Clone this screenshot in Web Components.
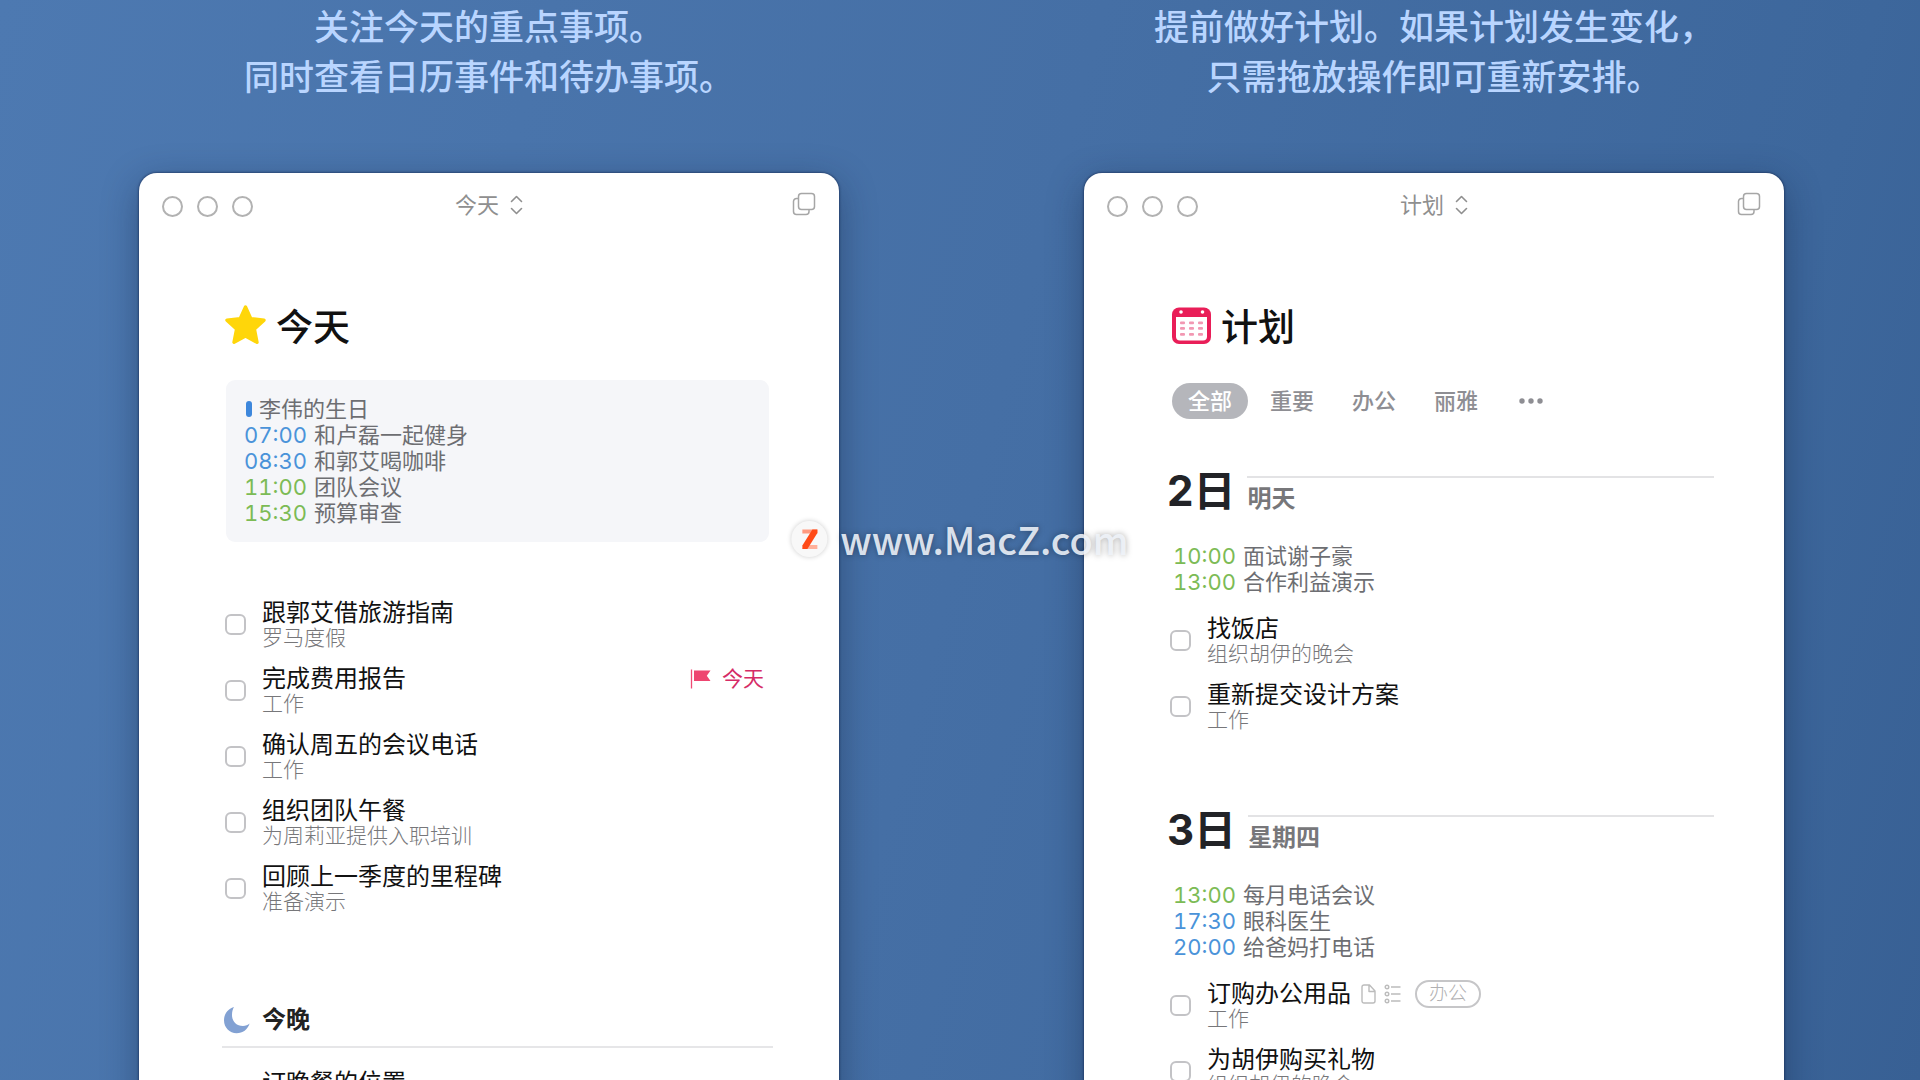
<!DOCTYPE html>
<html lang="zh-CN">
<head>
<meta charset="utf-8">
<title>今天 / 计划</title>
<style>
  html, body {
    margin: 0;
    height: 100%;
  }
  body {
    font-family: Inter, "Noto Sans CJK SC", sans-serif;
    background: #436da3;
  }
</style>
</head>
<body>
<promo-page>
  <promo-column>
    <span slot="headline">关注今天的重点事项。<br>同时查看日历事件和待办事项。</span>
    <app-window name="今天">
      <list-heading icon="star">今天</list-heading>
      <event-list boxed>
        <event-row>李伟的生日</event-row>
        <event-row time="07:00">和卢磊一起健身</event-row>
        <event-row time="08:30">和郭艾喝咖啡</event-row>
        <event-row time="11:00" kind="work">团队会议</event-row>
        <event-row time="15:30" kind="work">预算审查</event-row>
      </event-list>
      <todo-list>
        <todo-item project="罗马度假">跟郭艾借旅游指南</todo-item>
        <todo-item project="工作">完成费用报告<deadline-flag slot="end">今天</deadline-flag></todo-item>
        <todo-item project="工作">确认周五的会议电话</todo-item>
        <todo-item project="为周莉亚提供入职培训">组织团队午餐</todo-item>
        <todo-item project="准备演示">回顾上一季度的里程碑</todo-item>
      </todo-list>
      <evening-heading>今晚</evening-heading>
      <todo-list>
        <todo-item>订晚餐的位置</todo-item>
      </todo-list>
    </app-window>
  </promo-column>

  <promo-column>
    <span slot="headline">提前做好计划。如果计划发生变化，<br>只需拖放操作即可重新安排。</span>
    <app-window name="计划">
      <list-heading icon="calendar">计划</list-heading>
      <tag-filter tags="全部,重要,办公,丽雅"></tag-filter>
      <day-section day="2日" label="明天">
        <event-list>
          <event-row time="10:00" kind="work">面试谢子豪</event-row>
          <event-row time="13:00" kind="work">合作利益演示</event-row>
        </event-list>
        <todo-list>
          <todo-item project="组织胡伊的晚会">找饭店</todo-item>
          <todo-item project="工作">重新提交设计方案</todo-item>
        </todo-list>
      </day-section>
      <day-section day="3日" label="星期四">
        <event-list>
          <event-row time="13:00" kind="work">每月电话会议</event-row>
          <event-row time="17:30">眼科医生</event-row>
          <event-row time="20:00">给爸妈打电话</event-row>
        </event-list>
        <todo-list>
          <todo-item project="工作">订购办公用品<todo-meta slot="meta">办公</todo-meta></todo-item>
          <todo-item project="组织胡伊的晚会">为胡伊购买礼物</todo-item>
        </todo-list>
      </day-section>
    </app-window>
  </promo-column>
</promo-page>
<site-watermark>www.MacZ.com</site-watermark>

<script>
const icons = {
  star: `<svg width="41" height="41" viewBox="0 0 41 41"><path d="M20.5 2 L25.800 13.600 L39 15.200 L29.400 24 L32 37.300 L20.5 31 L9 37.300 L11.600 24 L2 15.200 L15.200 13.600 Z" fill="#ffd60a" stroke="#ffd60a" stroke-width="3.400" stroke-linejoin="round"/></svg>`,
  calendar: `<svg width="41" height="41" viewBox="0 0 41 41">
    <rect x="2" y="2.500" width="39" height="36.500" rx="7" fill="#e91e58"/>
    <path d="M6 12H37V31.500a4 4 0 0 1-4 4H10a4 4 0 0 1-4-4Z" fill="#fff"/>
    <circle cx="11" cy="7" r="1.800" fill="#fff"/><circle cx="32.500" cy="7" r="1.800" fill="#fff"/>
    <g fill="#f298b2"><rect x="10" y="16.500" width="5" height="2.800" rx="1"/><rect x="19" y="16.500" width="5" height="2.800" rx="1"/><rect x="28" y="16.500" width="5" height="2.800" rx="1"/>
    <rect x="10" y="22" width="5" height="2.800" rx="1"/><rect x="19" y="22" width="5" height="2.800" rx="1"/><rect x="28" y="22" width="5" height="2.800" rx="1"/>
    <rect x="10" y="28" width="5" height="2.800" rx="1"/><rect x="19" y="28" width="5" height="2.800" rx="1"/><rect x="28" y="28" width="5" height="2.800" rx="1"/></g></svg>`,
  updown: `<svg width="13" height="20" viewBox="0 0 13 20" fill="none" stroke="#8f8f8f" stroke-width="1.600" stroke-linecap="round" stroke-linejoin="round"><path d="M1.500 6.500 6.500 1.500l5 5M1.500 13.500l5 5 5-5"/></svg>`,
  windows: `<svg width="24" height="26" viewBox="0 0 24 26" fill="none" stroke="#a6a6a6" stroke-width="1.500"><rect x="6.500" y="1.500" width="16" height="16" rx="3"/><path d="M6 6.500H4.500a3 3 0 0 0-3 3V19.500a3 3 0 0 0 3 3H14a3 3 0 0 0 3-3V18"/></svg>`,
  moon: `<svg width="27" height="28" viewBox="0 0 27 28"><path d="M10 1C3.500 3.200 0 8.200 0 14.200c0 7.400 5.600 13 12.600 13 6.200 0 11-3.600 13-9.700-1.600 1.600-4 2.500-6.600 2.500C12.500 20 8 15.500 8 9c0-3 .6-5.600 2-8Z" fill="#82a1d3"/></svg>`,
  flag: `<svg width="22" height="20" viewBox="0 0 22 20"><path d="M1.500 0.500V19.500" stroke="#ef4a74" stroke-width="1.300"/><path d="M4 1.500H20.500L16.800 6.800 20.500 12H4Z" fill="#ee4570"/></svg>`,
  note: `<svg width="15" height="20" viewBox="0 0 15 20" fill="none" stroke="#bcbcbc" stroke-width="1.400" stroke-linejoin="round"><path d="M3 1H8.500L14 7V17a2 2 0 0 1-2 2H3a2 2 0 0 1-2-2V3a2 2 0 0 1 2-2ZM8 1.500V7.500H14"/></svg>`,
  checklist: `<svg width="17" height="20" viewBox="0 0 17 20" fill="none" stroke="#bcbcbc" stroke-width="1.400"><circle cx="3" cy="3" r="1.800"/><circle cx="3" cy="10" r="1.800"/><circle cx="3" cy="17" r="1.800"/><path d="M7 3h9.500M7 10h9.500M7 17h9.500"/></svg>`,
  more: `<svg width="30" height="6" viewBox="0 0 30 6" fill="#8e8e93"><circle cx="6" cy="3" r="2.700"/><circle cx="15" cy="3" r="2.700"/><circle cx="24" cy="3" r="2.700"/></svg>`,
};

class BaseElement extends HTMLElement {
  connectedCallback() {
    if (this.shadowRoot) {
      return;
    }
    const root = this.attachShadow({mode: 'open'});
    root.innerHTML = this.render();
  }
  attr(name) {
    return this.getAttribute(name) || '';
  }
}

class PromoPage extends BaseElement {
  render() {
    return `
      <style>
        :host {
          display: grid;
          grid-template-columns: 1fr 1fr;
          column-gap: 245px;
          box-sizing: border-box;
          height: 100vh;
          padding: 0 136px 0 139px;
          overflow: hidden;
          background: linear-gradient(105deg, #4d79b1 0%, #456fa5 50%, #3d679c 85%, #386094 100%);
        }
      </style>
      <slot></slot>
    `;
  }
}

class PromoColumn extends BaseElement {
  render() {
    return `
      <style>
        :host {
          display: flex;
          flex-direction: column;
          gap: 73px;
          min-width: 0;
        }
        h1 {
          margin: 0;
          font-size: 35px;
          line-height: 50px;
          font-weight: 500;
          text-align: center;
          white-space: nowrap;
          color: #b9d5ff;
          font-family: "Noto Sans CJK SC", sans-serif;
        }
      </style>
      <h1><slot name="headline"></slot></h1>
      <slot></slot>
    `;
  }
}

class AppWindow extends BaseElement {
  render() {
    return `
      <style>
        :host {
          display: block;
          min-height: 1100px;
          border-radius: 18px;
          background: #fff;
          box-shadow: 0 0 2px 1px rgba(20, 40, 80, .5), 0 10px 36px rgba(15, 30, 60, .4);
        }
        header {
          display: grid;
          grid-template-columns: 1fr auto 1fr;
          align-items: center;
          height: 64px;
          padding: 0 23px;
        }
        button {
          padding: 0;
          border: 0;
          background: none;
          font: inherit;
          color: inherit;
        }
        .lights {
          display: flex;
          gap: 14px;
          padding-top: 2px;
        }
        .lights button {
          width: 21px;
          height: 21px;
          border: 2px solid #b2b2b2;
          border-radius: 50%;
        }
        .name {
          display: flex;
          align-items: center;
          gap: 11px;
          font-size: 22px;
          line-height: 30px;
          color: #8f8f8f;
        }
        .copy {
          display: flex;
          justify-self: end;
        }
        main {
          padding: 64px 70px 0 86px;
        }
      </style>
      <header>
        <div class="lights">
          <button aria-label="关闭"></button>
          <button aria-label="最小化"></button>
          <button aria-label="缩放"></button>
        </div>
        <button class="name">${this.attr('name')}${icons.updown}</button>
        <button class="copy" aria-label="新窗口">${icons.windows}</button>
      </header>
      <main><slot></slot></main>
    `;
  }
}

class ListHeading extends BaseElement {
  render() {
    return `
      <style>
        :host {
          display: block;
        }
        h2 {
          display: flex;
          align-items: center;
          gap: 10px;
          margin: 0;
          font: 500 37px/48px "Noto Sans CJK SC", sans-serif;
          color: #111;
        }
      </style>
      <h2>${icons[this.attr('icon')]}<span><slot></slot></span></h2>
    `;
  }
}

class EventList extends BaseElement {
  render() {
    return `
      <style>
        :host {
          display: block;
          padding-left: 3px;
        }
        :host([boxed]) {
          margin: 31px 0 57px 1px;
          padding: 16px 18px;
          border-radius: 9px;
          background: #f5f6f9;
        }
      </style>
      <slot></slot>
    `;
  }
}

class EventRow extends BaseElement {
  render() {
    const time = this.attr('time');
    return `
      <style>
        :host {
          display: flex;
          align-items: center;
          gap: 7px;
          font-size: 22px;
          line-height: 26px;
          color: #6d6e72;
        }
        time {
          min-width: 61px;
          font-variant-numeric: tabular-nums;
          color: #4a93d9;
        }
        :host([kind="work"]) time {
          color: #7cbb55;
        }
        i {
          width: 6px;
          height: 16px;
          margin-left: 2px;
          border-radius: 3px;
          background: #3d87dc;
        }
      </style>
      ${time ? `<time>${time}</time>` : '<i></i>'}
      <span><slot></slot></span>
    `;
  }
}

class TodoList extends BaseElement {
  render() {
    return `
      <style>
        :host {
          display: flex;
          flex-direction: column;
          gap: 16px;
        }
      </style>
      <slot></slot>
    `;
  }
}

class TodoItem extends BaseElement {
  render() {
    return `
      <style>
        :host {
          display: flex;
          align-items: center;
          gap: 16px;
          min-height: 50px;
        }
        input {
          appearance: none;
          flex: none;
          width: 21px;
          height: 21px;
          margin: 0;
          border: 2px solid #c3c3c6;
          border-radius: 6px;
          background: #fff;
        }
        .body {
          flex: 1;
          align-self: flex-start;
        }
        .line {
          display: flex;
          align-items: center;
          height: 28px;
          font-size: 24px;
          line-height: 28px;
          color: #111;
        }
        slot[name="end"] {
          display: block;
          margin-left: auto;
        }
        p {
          margin: 0;
          font-size: 21px;
          line-height: 22px;
          font-weight: 300;
          color: #77777a;
        }
      </style>
      <input type="checkbox" id="done">
      <div class="body">
        <div class="line"><label for="done"><slot></slot></label><slot name="meta"></slot><slot name="end"></slot></div>
        <p>${this.attr('project')}</p>
      </div>
    `;
  }
}

class DeadlineFlag extends BaseElement {
  render() {
    return `
      <style>
        :host {
          display: flex;
          align-items: center;
          gap: 10px;
          margin-right: 5px;
          font-size: 21px;
          color: #d52b66;
        }
      </style>
      ${icons.flag}<span><slot></slot></span>
    `;
  }
}

class TodoMeta extends BaseElement {
  render() {
    return `
      <style>
        :host {
          display: flex;
          align-items: center;
          gap: 8px;
          margin-left: 10px;
        }
        span {
          margin-left: 6px;
          padding: 0 12px;
          border: 2px solid #c6c6c8;
          border-radius: 14px;
          font-size: 19px;
          line-height: 24px;
          font-weight: 300;
          color: #b0b0b2;
        }
      </style>
      ${icons.note}${icons.checklist}<span><slot></slot></span>
    `;
  }
}

class EveningHeading extends BaseElement {
  render() {
    return `
      <style>
        :host {
          display: block;
          margin: 91px -4px 21px -3px;
          padding: 0 2px 10px;
          border-bottom: 2px solid #e6e6e8;
        }
        h3 {
          display: flex;
          align-items: center;
          gap: 11px;
          margin: 0;
          font-size: 24px;
          line-height: 32px;
          font-weight: 700;
          color: #222;
        }
      </style>
      <h3>${icons.moon}<span><slot></slot></span></h3>
    `;
  }
}

class TagFilter extends BaseElement {
  render() {
    const tags = this.attr('tags').split(',');
    return `
      <style>
        :host {
          display: flex;
          gap: 6px;
          margin-top: 34px;
          padding-left: 2px;
        }
        button {
          height: 36px;
          padding: 0 16px;
          border: 0;
          border-radius: 18px;
          background: none;
          font: 500 22px/36px Inter, "Noto Sans CJK SC", sans-serif;
          color: #8e8e93;
        }
        button[aria-pressed="true"] {
          background: #b5b6bb;
          color: #fff;
        }
        svg {
          display: block;
        }
      </style>
      ${tags.map((tag, i) => `<button aria-pressed="${i === 0}">${tag}</button>`).join('')}
      <button aria-label="更多">${icons.more}</button>
    `;
  }
}

class DaySection extends BaseElement {
  render() {
    return `
      <style>
        :host {
          display: block;
          margin-top: 48px;
        }
        :host(:nth-of-type(n+2)) {
          margin-top: 75px;
        }
        header {
          display: flex;
          gap: 12px;
          margin: 0 0 28px -3px;
        }
        h3, h4 {
          margin: 0;
          font-weight: 700;
        }
        h3 {
          font-size: 42px;
          line-height: 48px;
          color: #222327;
        }
        h4 {
          flex: 1;
          margin-top: 9px;
          padding-top: 7px;
          border-top: 2px solid #e3e3e5;
          font-size: 24px;
          line-height: 28px;
          color: #77777a;
        }
        ::slotted(todo-list) {
          margin-top: 20px;
        }
      </style>
      <header>
        <h3>${this.attr('day')}</h3>
        <h4>${this.attr('label')}</h4>
      </header>
      <slot></slot>
    `;
  }
}

class SiteWatermark extends BaseElement {
  render() {
    return `
      <style>
        :host {
          position: absolute;
          top: 539px;
          left: 50%;
          transform: translate(-50%, -50%);
          display: flex;
          align-items: center;
          gap: 13px;
          font: 500 38px/46px "Noto Sans CJK SC", sans-serif;
          color: rgba(240, 244, 250, .9);
          text-shadow: 0 0 6px rgba(0, 0, 0, .35);
        }
        svg {
          border-radius: 50%;
          background: #f8f8f8;
          box-shadow: 0 0 5px rgba(0, 0, 0, .2);
        }
      </style>
      <svg width="36" height="36" viewBox="0 0 36 36"><path d="M11 8.500H26V12.500H11Z" fill="#ff9a80"/><path d="M14 24H26V28H11Z" fill="#ffb09a"/><path d="M21 8.500H26V12L16 28H11V24.500Z" fill="#ff4a17"/></svg>
      <span><slot></slot></span>
    `;
  }
}

customElements.define('promo-page', PromoPage);
customElements.define('promo-column', PromoColumn);
customElements.define('app-window', AppWindow);
customElements.define('list-heading', ListHeading);
customElements.define('event-list', EventList);
customElements.define('event-row', EventRow);
customElements.define('todo-list', TodoList);
customElements.define('todo-item', TodoItem);
customElements.define('deadline-flag', DeadlineFlag);
customElements.define('todo-meta', TodoMeta);
customElements.define('evening-heading', EveningHeading);
customElements.define('tag-filter', TagFilter);
customElements.define('day-section', DaySection);
customElements.define('site-watermark', SiteWatermark);
</script>
</body>
</html>
